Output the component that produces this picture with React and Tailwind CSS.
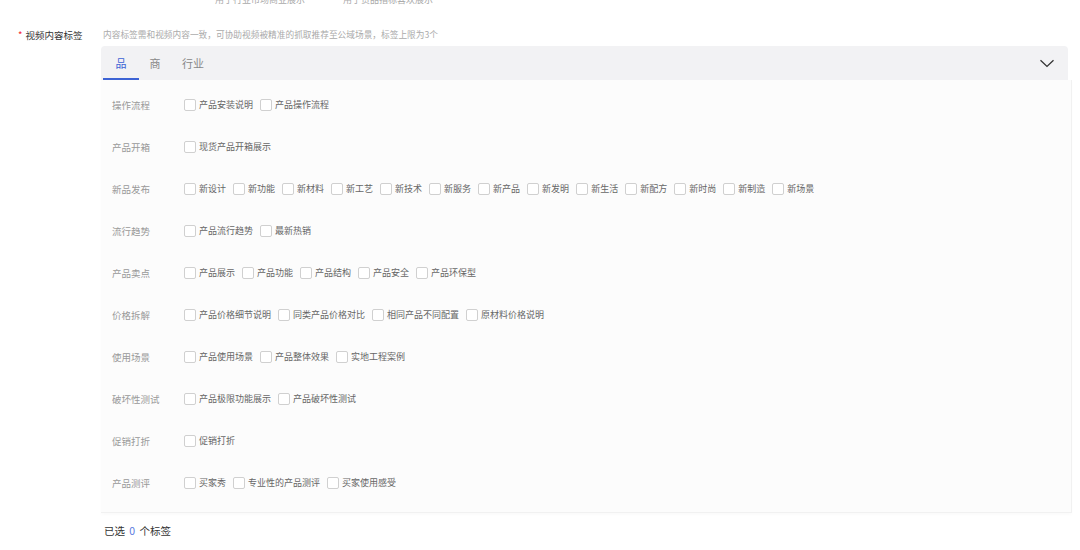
import React from "react";

const rows = [
  ["操作流程", ["产品安装说明", "产品操作流程"]],
  ["产品开箱", ["现货产品开箱展示"]],
  ["新品发布", ["新设计", "新功能", "新材料", "新工艺", "新技术", "新服务", "新产品", "新发明", "新生活", "新配方", "新时尚", "新制造", "新场景"]],
  ["流行趋势", ["产品流行趋势", "最新热销"]],
  ["产品卖点", ["产品展示", "产品功能", "产品结构", "产品安全", "产品环保型"]],
  ["价格拆解", ["产品价格细节说明", "同类产品价格对比", "相同产品不同配置", "原材料价格说明"]],
  ["使用场景", ["产品使用场景", "产品整体效果", "实地工程案例"]],
  ["破坏性测试", ["产品极限功能展示", "产品破坏性测试"]],
  ["促销打折", ["促销打折"]],
  ["产品测评", ["买家秀", "专业性的产品测评", "买家使用感受"]],
];

function Option({ text }) {
  return (
    <label className="flex items-center mr-[7px]">
      <span className="w-[12px] h-[12px] border border-[#d0d0d0] rounded-[2px] bg-white shrink-0" />
      <span className="ml-[3px] text-[9px] leading-[12px] text-[#666]">{text}</span>
    </label>
  );
}

export default function App() {
  return (
    <div
      className="w-[1080px] h-[550px] bg-white overflow-hidden"
      style={{ fontFamily: '"Noto Sans CJK SC", "Noto Sans", sans-serif' }}
    >
      <div className="h-[28px] flex flex-col overflow-hidden">
        <div className="flex -mt-[6px] text-[9px] leading-[12px] text-[#aaa]">
          <span className="ml-[215px]">用于行业市场商业展示</span>
          <span className="ml-[38px]">用于货品指标喜欢展示</span>
        </div>
      </div>
      <div className="flex">
        <div className="w-[101px] shrink-0 pl-[18px] text-[9.5px] leading-[14px] text-[#333]">
          <span className="text-[#f5222d] mr-[3px]">*</span>视频内容标签
        </div>
        <div className="flex flex-col">
          <div className="pl-[2px] text-[8.7px] leading-[14px] text-[#aaa]">
            内容标签需和视频内容一致，可协助视频被精准的抓取推荐至公域场景，标签上限为3个
          </div>
          <div className="mt-[4px] w-[967px] h-[34px] bg-[#f2f2f4] rounded-t-[4px] flex items-stretch justify-between">
            <div className="flex items-stretch pl-[2px] text-[11px]">
              <div className="w-[36px] flex items-center justify-center text-[#3d63d4] border-b-2 border-[#3d63d4] pt-[2px]">品</div>
              <div className="w-[32px] flex items-center justify-center text-[#888]">商</div>
              <div className="pl-[11px] flex items-center text-[#888]">行业</div>
            </div>
            <div className="flex items-center pr-[13px]">
              <svg width="16" height="9" viewBox="0 0 16 9" fill="none">
                <path d="M1.5 1.2 L8 7.4 L14.5 1.2" stroke="#333" strokeWidth="1.3" />
              </svg>
            </div>
          </div>
          <div className="w-[971px] h-[433px] bg-[#fcfcfc] border-r border-b border-[#f1f1f1] pt-[4px] pb-[9px] shadow-[0_2px_3px_rgba(0,0,0,0.02)]">
            {rows.map(([label, opts]) => (
              <div key={label} className="h-[42px] flex items-center pl-[11px]">
                <div className="w-[72px] shrink-0 text-[9.5px] text-[#999]">{label}</div>
                <div className="flex items-center">
                  {opts.map((o) => (
                    <Option key={o} text={o} />
                  ))}
                </div>
              </div>
            ))}
          </div>
          <div className="mt-[11px] pl-[3px] text-[10.5px] leading-[14px] text-[#333]">
            已选 <span className="text-[#5b7be0] mx-[2px]">0</span> 个标签
          </div>
        </div>
      </div>
    </div>
  );
}
